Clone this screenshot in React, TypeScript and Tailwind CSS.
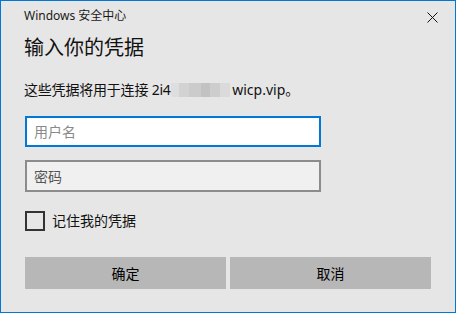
import React from "react";

const font = { fontFamily: '"Noto Sans", "Noto Sans CJK SC", sans-serif' };

// greys that stand in for the blurred part of the host name
const blur = [
  { w: 8, c: "bg-[#dedede]" },
  { w: 10, c: "bg-[#d2d2d2]" },
  { w: 12, c: "bg-[#cbcbcb]" },
  { w: 9, c: "bg-[#c2c2c2]" },
  { w: 10, c: "bg-[#cdcdcd]" },
  { w: 10, c: "bg-[#dadada]" },
];

export default function App() {
  return (
    <div
      className="w-[456px] h-[313px] border border-[#0078d7] bg-[#e6e6e6] flex flex-col text-black"
      style={font}
    >
      {/* Title bar */}
      <div className="h-[30px] flex items-center justify-between pl-[23px] pr-[17px]">
        <span className="text-[12px] leading-none text-[#1a1a1a]">Windows 安全中心</span>
        <svg width="11" height="11" viewBox="0 0 11 11" className="mt-[3px]">
          <path d="M0.5 0.5 L10.5 10.5 M10.5 0.5 L0.5 10.5" stroke="#111" strokeWidth="1" />
        </svg>
      </div>

      <div className="flex flex-col pl-[23px]">
        <h1 className="mt-[3px] h-[28px] leading-[28px] text-[20px] font-normal text-[#111]">
          输入你的凭据
        </h1>

        <p className="mt-[18px] h-[20px] leading-[20px] text-[14px] flex items-center text-[#111]">
          <span className="tracking-[-0.2px]">这些凭据将用于连接 2i4.</span>
          <span className="flex h-[14px] -ml-[3px] mr-[2px]">
            {blur.map((b, i) => (
              <span key={i} className={b.c} style={{ width: b.w }} />
            ))}
          </span>
          <span>wicp.vip。</span>
        </p>

        <div className="mt-[16px] ml-px w-[296px] h-[31px] border-2 border-[#0078d7] bg-white flex items-center pl-[7px] text-[14px] text-[#8a8a8a]">
          用户名
        </div>

        <div className="mt-[13px] ml-px w-[296px] h-[32px] border-2 border-[#8c8c8c] bg-[#f0f0f0] flex items-center pl-[7px] text-[14px] text-[#555]">
          密码
        </div>

        <div className="mt-[18px] ml-px flex items-center gap-[7px]">
          <div className="w-[20px] h-[20px] border-2 border-[#333]" />
          <span className="text-[14px] text-[#111]">记住我的凭据</span>
        </div>

        <div className="mt-[26px] ml-px flex gap-[4px]">
          <button className="w-[201px] h-[32px] bg-[#b7b7b7] text-[14px] text-black">确定</button>
          <button className="w-[201px] h-[32px] bg-[#b7b7b7] text-[14px] text-black">取消</button>
        </div>
      </div>
    </div>
  );
}
